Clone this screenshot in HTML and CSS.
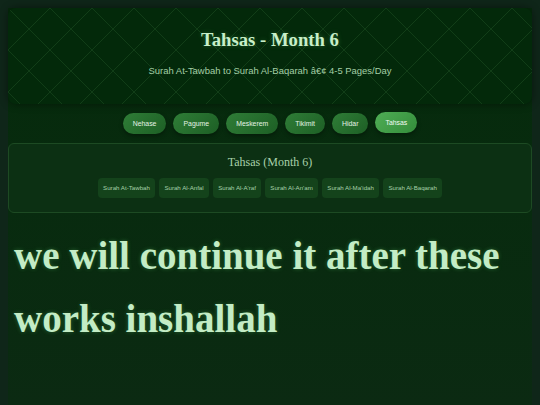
FILE: index.html
```html
<!DOCTYPE html>
<html lang="en">
<head>
<meta charset="utf-8">
<title>Tahsas - Month 6</title>
<link rel="stylesheet" href="styles.css">
</head>
<body>
<div class="page">
  <header class="hero">
    <h1 class="hero-title">Tahsas - Month 6</h1>
    <p class="hero-sub">Surah At-Tawbah to Surah Al-Baqarah â€¢ 4-5 Pages/Day</p>
  </header>
  <nav class="months">
    <button class="month">Nehase</button>
    <button class="month">Pagume</button>
    <button class="month">Meskerem</button>
    <button class="month">Tikimit</button>
    <button class="month">Hidar</button>
    <button class="month active">Tahsas</button>
  </nav>
  <section class="card">
    <h2 class="card-title">Tahsas (Month 6)</h2>
    <div class="chips">
      <span class="chip">Surah At-Tawbah</span>
      <span class="chip">Surah Al-Anfal</span>
      <span class="chip">Surah Al-A'raf</span>
      <span class="chip">Surah Al-An'am</span>
      <span class="chip">Surah Al-Ma'idah</span>
      <span class="chip">Surah Al-Baqarah</span>
    </div>
  </section>
  <p class="notice">we will continue it after these works inshallah</p>
</div>
</body>
</html>
```
FILE: styles.css
```css
html, body {
  margin: 0;
  padding: 0;
  height: 100%;
  background: #0f2619;
}
body {
  font-family: "Liberation Sans", Arial, sans-serif;
  overflow: hidden;
}
.page {
  margin: 8px 8px 0;
  min-height: 397px;
  background: linear-gradient(180deg, #052a0b 0%, #082b0f 50%, #0b2a12 100%);
  display: flex;
  flex-direction: column;
}
.hero {
  height: 96px;
  box-sizing: border-box;
  border-radius: 8px;
  background-color: #03290a;
  background-image:
    linear-gradient(45deg, transparent 49%, rgba(90, 170, 95, 0.16) 49%, rgba(90, 170, 95, 0.16) 51%, transparent 51%),
    linear-gradient(-45deg, transparent 49%, rgba(90, 170, 95, 0.16) 49%, rgba(90, 170, 95, 0.16) 51%, transparent 51%);
  background-size: 42px 42px;
  box-shadow: 0 0 8px rgba(0, 0, 0, 0.45);
  text-align: center;
  padding-top: 21px;
}
.hero-title {
  margin: 0;
  font-family: "Liberation Serif", "Times New Roman", serif;
  font-weight: bold;
  font-size: 18.7px;
  line-height: 22px;
  color: #c8efc9;
  text-shadow: 0 0 5px rgba(120, 230, 130, 0.3);
}
.hero-sub {
  margin: 14px 0 0;
  font-size: 9.45px;
  line-height: 12px;
  color: #a3cfa6;
}
.months {
  display: flex;
  justify-content: center;
  align-items: center;
  gap: 7px;
  margin-top: 9px;
}
.month {
  height: 21px;
  padding: 0 10px;
  border: none;
  border-radius: 11px;
  font-family: "Liberation Sans", Arial, sans-serif;
  font-size: 6.9px;
  color: #e3f3e4;
  background: linear-gradient(135deg, #2f7d37 0%, #1d5f25 100%);
  box-shadow: 0 2px 4px rgba(0, 0, 0, 0.35);
}
.month.active {
  background: linear-gradient(135deg, #4fae55 0%, #348c3b 100%);
  transform: translateY(-1px);
  color: #f2fbf2;
}
.card {
  margin-top: 9px;
  height: 70px;
  box-sizing: border-box;
  border: 1px solid #1d4a23;
  border-radius: 6px;
  background: #0c3013;
  text-align: center;
  padding-top: 11px;
}
.card-title {
  margin: 0;
  font-family: "Liberation Serif", "Times New Roman", serif;
  font-weight: normal;
  font-size: 12px;
  line-height: 14px;
  color: #a8d0aa;
}
.chips {
  display: flex;
  justify-content: center;
  gap: 4.5px;
  margin-top: 9px;
}
.chip {
  height: 20px;
  line-height: 20px;
  padding: 0 5px;
  border-radius: 4px;
  background: #14431b;
  font-size: 6.15px;
  color: #a6d2a9;
}
.notice {
  margin: 11px 0 0 6px;
  font-family: "Liberation Serif", "Times New Roman", serif;
  font-weight: bold;
  font-size: 39px;
  line-height: 63px;
  color: #c3ecc5;
  text-shadow: 0 0 4px rgba(110, 230, 120, 0.3);
}
```
